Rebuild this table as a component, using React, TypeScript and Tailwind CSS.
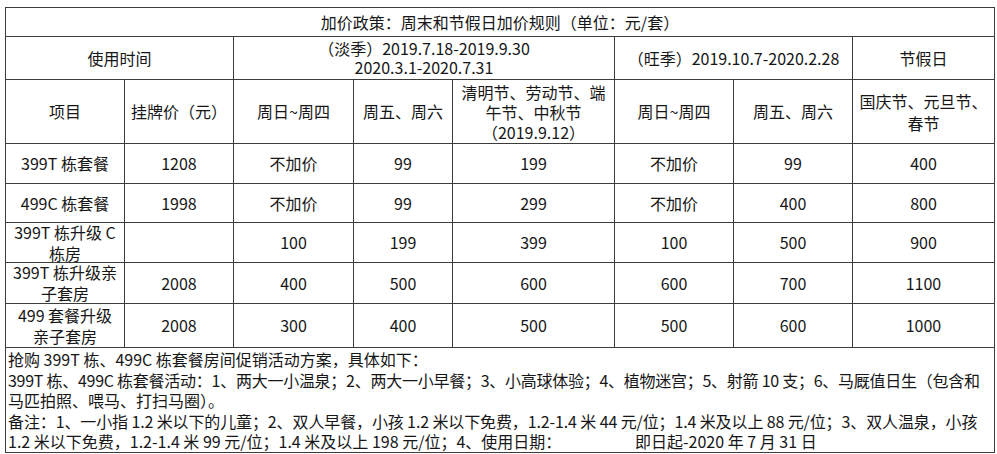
import type { ReactNode } from 'react'

const cellBase = 'bg-white flex items-center justify-center text-center leading-[19px]'

// 价格数据行
const priceRows: { name: ReactNode; list: string; values: string[] }[] = [
    { name: '399T 栋套餐', list: '1208', values: ['不加价', '99', '199', '不加价', '99', '400'] },
    { name: '499C 栋套餐', list: '1998', values: ['不加价', '99', '299', '不加价', '400', '800'] },
    { name: <>399T 栋升级 C<br />栋房</>, list: '', values: ['100', '199', '399', '100', '500', '900'] },
    { name: <>399T 栋升级亲<br />子套房</>, list: '2008', values: ['400', '500', '600', '600', '700', '1100'] },
    { name: <>499 套餐升级<br />亲子套房</>, list: '2008', values: ['300', '400', '500', '500', '600', '1000'] },
]

const rowHeights = ['h-[39px]', 'h-[38px]', 'h-[39px]', 'h-[40px]', 'h-[43px]']

function Cell({ children, className = '' }: { children?: ReactNode; className?: string }) {
    return <div className={`${cellBase} ${className}`}>{children}</div>
}

export default function App() {
    return (
        <div className="w-[997px] h-[454px] bg-white pt-[7px] pl-[5px] text-[16px] text-[#161616] font-['Noto_Sans_CJK_SC','Noto_Sans',sans-serif]">
            <div className="w-[990px] grid grid-cols-[118px_108px_119px_98px_161px_118px_118px_141px] gap-px bg-[#3c3c3c] border border-[#3c3c3c]">
                {/* 标题 */}
                <Cell className="col-span-8 h-[28px]">加价政策：周末和节假日加价规则（单位：元/套）</Cell>

                {/* 使用时间 */}
                <Cell className="col-span-2 h-[42px]">使用时间</Cell>
                <Cell className="col-span-3">
                    <div>
                        （淡季）2019.7.18-2019.9.30
                        <br />
                        2020.3.1-2020.7.31
                    </div>
                </Cell>
                <Cell className="col-span-2">（旺季）2019.10.7-2020.2.28</Cell>
                <Cell>节假日</Cell>

                {/* 表头 */}
                <Cell className="h-[63px]">项目</Cell>
                <Cell>挂牌价（元）</Cell>
                <Cell>周日~周四</Cell>
                <Cell>周五、周六</Cell>
                <Cell>
                    <div className="leading-[20px]">
                        清明节、劳动节、端
                        <br />
                        午节、中秋节
                        <br />
                        （2019.9.12）
                    </div>
                </Cell>
                <Cell>周日~周四</Cell>
                <Cell>周五、周六</Cell>
                <Cell>
                    <div className="leading-[22px]">
                        国庆节、元旦节、
                        <br />
                        春节
                    </div>
                </Cell>

                {/* 数据 */}
                {priceRows.map((row, i) => (
                    <div key={i} className="contents">
                        <Cell className={`${rowHeights[i]} leading-[21px]`}>
                            <div>{row.name}</div>
                        </Cell>
                        <Cell>{row.list}</Cell>
                        {row.values.map((v, j) => (
                            <Cell key={j}>{v}</Cell>
                        ))}
                    </div>
                ))}

                {/* 促销说明 */}
                <div className="col-span-8 h-[104px] bg-white pl-[2px] pt-[1px] leading-[20.6px] whitespace-nowrap">
                    <div>抢购 399T 栋、499C 栋套餐房间促销活动方案，具体如下：</div>
                    <div className="tracking-[-0.26px]">399T 栋、499C 栋套餐活动：1、两大一小温泉；2、两大一小早餐；3、小高球体验；4、植物迷宫；5、射箭 10 支；6、马厩值日生（包含和</div>
                    <div>马匹拍照、喂马、打扫马圈）。</div>
                    <div className="tracking-[-0.12px]">备注：1、一小指 1.2 米以下的儿童；2、双人早餐，小孩 1.2 米以下免费，1.2-1.4 米 44 元/位；1.4 米及以上 88 元/位；3、双人温泉，小孩</div>
                    <div>
                        <span className="inline-block w-[627px]">1.2 米以下免费，1.2-1.4 米 99 元/位；1.4 米及以上 198 元/位；4、使用日期：</span>
                        <span>即日起-2020 年 7 月 31 日</span>
                    </div>
                </div>
            </div>
        </div>
    )
}
